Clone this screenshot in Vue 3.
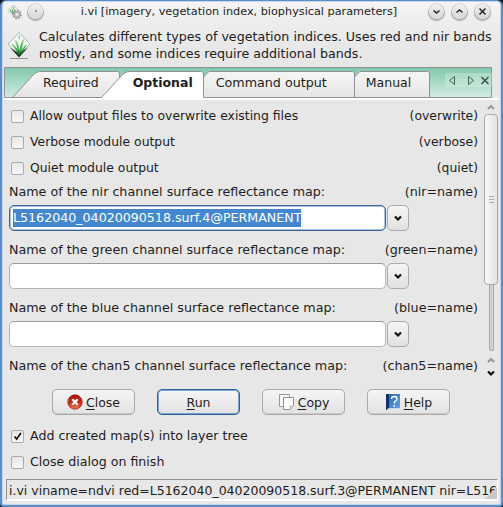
<script setup>
const flags = [
  { label: 'Allow output files to overwrite existing files', key: '(overwrite)' },
  { label: 'Verbose module output', key: '(verbose)' },
  { label: 'Quiet module output', key: '(quiet)' },
]
const fields = [
  { name: 'nir', value: 'L5162040_04020090518.surf.4@PERMANENT' },
  { name: 'green', value: '' },
  { name: 'blue', value: '' },
]
</script>

<template>
  <div class="desktop">
    <div class="window">
      <header class="titlebar">
        <svg class="app-icon" width="16" height="16" viewBox="0 0 16 16">
          <path d="M6.500 1L12 6.500L6.500 12L1 6.500Z" fill="#f4f6f4" stroke="#bcc4bc" />
          <path d="M6.500 3V5M3 6L6 10L8 5M6 10L5 5" stroke="#4aaa58" fill="none" />
          <circle cx="10" cy="10.500" r="3.700" fill="#ddd" stroke="#999" stroke-width="2" stroke-dasharray="1.800 1" />
          <circle cx="10" cy="10.500" r="2.800" fill="#ccc" stroke="#a5a5a5" />
          <circle cx="10" cy="10.500" r="1" fill="#fff" />
        </svg>
        <span class="round pin"><i></i></span>
        <h1>i.vi [imagery, vegetation index, biophysical parameters]</h1>
        <span class="round"><svg width="15" height="15" viewBox="0 0 15 15"><path d="M4.500 6.500L7.500 9L10.500 6.500" /></svg></span>
        <span class="round"><svg width="15" height="15" viewBox="0 0 15 15"><path d="M4.500 8.500L7.500 6L10.500 8.500" /></svg></span>
        <span class="round"><svg width="15" height="15" viewBox="0 0 15 15"><path d="M4.500 4.500L10.500 10.500M10.500 4.500L4.500 10.500" /></svg></span>
      </header>

      <section class="intro">
        <svg width="24" height="30" viewBox="0 0 24 30">
          <defs>
            <linearGradient id="leaf" gradientUnits="userSpaceOnUse" x1="0" y1="8" x2="0" y2="26">
              <stop offset="0" stop-color="#86d98a" /><stop offset=".6" stop-color="#35a546" /><stop offset="1" stop-color="#0a2a0e" />
            </linearGradient>
          </defs>
          <path d="M12 1.500L23 13L12 24.500L1 13Z" fill="#f5f7f5" stroke="#b2b8b2" />
          <path d="M12 26.500L3 16.500L12 22.500L21 16.500Z" fill="#243c27" />
          <path d="M11.700 25C9.500 19 7.500 16 5 13.500C8.500 15.500 10.500 18 11.800 23Z M11.700 23C10.500 17 10 13 8.500 9.500C11 12.500 12 16 12.200 21Z M12.200 24C13 17 14 12 16.500 8.500C15.500 13 14.800 18 12.600 24Z M12.400 25C14 20 16 16.500 19.500 14C17 17.500 15.500 21 12.600 25Z" fill="url(#leaf)" stroke="url(#leaf)" stroke-width=".8" />
          <path d="M12.300 4.500V8.500" stroke="#70cc78" stroke-width="1.200" />
          <path d="M3 27.500H21" stroke="#909590" />
        </svg>
        <p>Calculates different types of vegetation indices. Uses red and nir bands<br />mostly, and some indices require additional bands.</p>
      </section>

      <nav class="tabs">
        <svg class="tab-shapes" width="488" height="31" viewBox="0 0 488 31">
          <defs>
            <linearGradient id="strip" x1="0" y1="0" x2="0" y2="1">
              <stop offset="0" stop-color="#80c8ab" /><stop offset="1" stop-color="#d2ebe1" />
            </linearGradient>
            <linearGradient id="tab" x1="0" y1="0" x2="0" y2="1">
              <stop offset="0" stop-color="#f6f6f6" /><stop offset="1" stop-color="#e4e5e4" />
            </linearGradient>
          </defs>
          <rect x=".5" y=".5" width="487" height="30" fill="url(#strip)" />
          <path d="M8.500 30.500L30 7Q33 4.500 36 4.500H113.500Q115.500 4.500 115.500 7V30.500Z" fill="url(#tab)" stroke="#929292" />
          <path d="M199.500 30.500V10L205 4.500H348.500Q350.500 4.500 350.500 7V30.500Z" fill="url(#tab)" stroke="#929292" />
          <path d="M350.500 30.500V10L356 4.500H423.500Q425.500 4.500 425.500 7V30.500Z" fill="url(#tab)" stroke="#929292" />
          <path d="M97.500 30.500L119 7Q122 4.500 125 4.500H197.500Q199.500 4.500 199.500 7V30.500Z" fill="#fff" stroke="#929292" />
          <path d="M98 30.500H.5V.5H487.500V30.500H199.500" fill="none" stroke="#929292" />
          <path d="M98 30.500H199" stroke="#fff" />
          <rect x="441" y="6" width="47" height="14" fill="#fff" opacity=".24" />
          <path d="M450.500 9.500V17.500L445.500 13.500ZM464.500 9.500V17.500L469.500 13.500Z" fill="none" stroke="#3c6654" />
          <path d="M477.500 10L484.500 17M484.500 10L477.500 17" fill="none" stroke="#3c5148" stroke-width="1.500" />
        </svg>
        <div class="tab-labels">
          <span>Required</span><b>Optional</b><span>Command output</span><span>Manual</span>
        </div>
      </nav>

      <main>
        <div class="form">
          <label v-for="f in flags" :key="f.key" class="flag">
            <i class="check"></i><span>{{ f.label }}</span><em>{{ f.key }}</em>
          </label>
          <div v-for="f in fields" :key="f.name" class="field">
            <div class="caption"><span>Name of the {{ f.name }} channel surface reflectance map:</span><em>({{ f.name }}=name)</em></div>
            <div class="combo">
              <div class="entry" :class="{ focused: f.value }"><mark v-if="f.value">{{ f.value }}</mark></div>
              <div class="drop"><svg width="8" height="7" viewBox="0 0 8 7"><path d="M1 1.500L4 4.500L7 1.500" /></svg></div>
            </div>
          </div>
          <div class="field">
            <div class="caption"><span>Name of the chan5 channel surface reflectance map:</span><em>(chan5=name)</em></div>
          </div>
        </div>
        <div class="scroll">
          <svg class="dim" width="8" height="7" viewBox="0 0 8 7"><path d="M1 5L4 2L7 5" /></svg>
          <div class="track"><div class="thumb"><i></i><i></i><i></i></div><div class="groove"></div></div>
          <svg class="dim" width="8" height="7" viewBox="0 0 8 7"><path d="M1 5L4 2L7 5" /></svg>
          <svg class="dark" width="8" height="7" viewBox="0 0 8 7"><path d="M1 1.500L4 4.500L7 1.500" /></svg>
        </div>
      </main>

      <div class="buttons">
        <button>
          <svg width="16" height="16" viewBox="0 0 16 16">
            <defs><linearGradient id="red" x1="0" y1="0" x2="0" y2="1"><stop offset="0" stop-color="#a91311" /><stop offset=".5" stop-color="#c42813" /><stop offset="1" stop-color="#ef7955" /></linearGradient></defs>
            <circle cx="8" cy="8" r="7.200" fill="url(#red)" stroke="#a51b14" stroke-width=".8" />
            <path d="M5.300 5.300L10.700 10.700M10.700 5.300L5.300 10.700" stroke="#fff" stroke-width="2.300" />
          </svg>
          <span><u>C</u>lose</span>
        </button>
        <button class="primary"><span><u>R</u>un</span></button>
        <button>
          <svg width="17" height="16" viewBox="0 0 17 16">
            <path d="M1.500 .5H11.500V9L8 12.500H1.500Z" fill="#fafafa" stroke="#999" />
            <path d="M5.500 3.500H15.500V11.500L12 15.500H5.500Z" fill="#fff" stroke="#8e8e8e" />
            <path d="M12 15.500V12H15.500Z" fill="#ddd" stroke="#aaa" stroke-width=".7" />
          </svg>
          <span><u>C</u>opy</span>
        </button>
        <button>
          <svg width="16" height="16" viewBox="0 0 16 16">
            <defs><linearGradient id="blue" x1="0" y1="0" x2="1" y2="1"><stop offset="0" stop-color="#245eab" /><stop offset="1" stop-color="#63a4ec" /></linearGradient></defs>
            <path d="M1 0H15V14L14 15H3L1 16Z" fill="url(#blue)" /><path d="M1 0H4V15L1 16Z" fill="#142f61" />
            <path d="M2 15.500L4 14.500H15" stroke="#c9d8ea" fill="none" />
            <path d="M6.500 5Q6.500 2.500 9.500 2.500Q12 2.500 12 4.700Q12 6 10.500 7Q9.200 8 9.200 9.500M9.200 11V12.800" stroke="#fff" stroke-width="1.400" fill="none" />
          </svg>
          <span><u>H</u>elp</span>
        </button>
      </div>

      <div class="options">
        <label class="flag"><i class="check"><svg width="13" height="13" viewBox="0 0 13 13"><path d="M3 6.500L5.500 9.500L10.500 2.500" /></svg></i><span>Add created map(s) into layer tree</span></label>
        <label class="flag"><i class="check"></i><span>Close dialog on finish</span></label>
      </div>

      <footer><span>i.vi viname=ndvi red=L5162040_04020090518.surf.3@PERMANENT nir=L5162040_04020090518</span>
        <svg class="grip" width="12" height="12" viewBox="0 0 12 12"><path d="M12 0V12H0Z" fill="#c8c8c8" /></svg>
      </footer>
    </div>
  </div>
</template>

<style>
body { background: #05080f; overflow: hidden; }
</style>

<style scoped>
* { box-sizing: border-box; }
.desktop { width: 503px; height: 507px; background: #101722; font: 12.5px/17px "DejaVu Sans", sans-serif; color: #1d1d1d; }
.window { width: 503px; height: 507px; display: flex; flex-direction: column; border: 2px solid #5b8dc8; border-top-width: 1px; border-radius: 6px 6px 4px 4px; background: linear-gradient(#f5f5f5, #ededed 22px, #e7e7e7 50px); padding: 0 2px; overflow: hidden; box-shadow: inset 0 0 0 1px #c5d6e9; }
i, em { font-style: normal; }
h1, p { margin: 0; font-weight: normal; }
span, b, p, h1, em { white-space: nowrap; }
.titlebar { height: 22px; flex: none; display: flex; align-items: center; padding: 0 9px 2px 3px; }
.app-icon { margin-right: 5px; margin-top: 2px; }
.titlebar h1 { flex: 1; font-size: 11.250px; line-height: 20px; text-align: center; padding: 1px 0 0 6px; }
.round { width: 15px; height: 15px; flex: none; border-radius: 50%; background: linear-gradient(#f0f0f0, #d8d8d8); box-shadow: 0 0 0 .5px #bbb, 0 1px 1px 1px #aaa; display: flex; align-items: center; justify-content: center; }
.round + .round { margin-left: 8px; }
.round path { fill: none; stroke: #252525; stroke-width: 1.500; }
.pin i { width: 2px; height: 2px; background: #999; }
.intro { height: 44px; flex: none; display: flex; padding: 5px 0 0 3px; gap: 8px; font-size: 12.650px; }
.intro svg { margin-top: 3px; flex: none; }
.tabs { height: 31px; width: 488px; flex: none; display: grid; }
.tab-shapes, .tab-labels { grid-area: 1 / 1; }
.tab-labels { display: flex; align-items: center; padding-left: 39px; }
.tab-labels b { margin-left: 34px; }
.tab-labels span:nth-child(3) { margin-left: 23px; font-size: 12.700px; }
.tab-labels span:nth-child(4) { margin-left: 39px; }
main { height: 282px; flex: none; display: flex; border-top: 2px solid #fff; }
.form { width: 474px; padding: 3px 0 0 5px; overflow: hidden; }
.flag { display: flex; align-items: center; height: 26px; padding-left: 2px; font-size: 12.400px; }
.flag span, .flag em { padding-bottom: 2px; }
.check { width: 13px; height: 13px; flex: none; margin-right: 6px; border: 1px solid #aaa; border-radius: 2px; background: linear-gradient(#e8e8e8, #f7f7f7); display: flex; align-items: center; justify-content: center; }
.check path { fill: none; stroke: #111; stroke-width: 2; }
.flag em, .caption em { margin-left: auto; }
.field { padding-top: 9px; }
.flag + .field { padding-top: 1px; }
.caption { height: 23px; padding-bottom: 4px; display: flex; align-items: center; font-size: 12.700px; }
.combo { display: flex; gap: 1px; height: 26px; }
.entry { width: 377px; border: 1px solid #b6b6b6; border-top-color: #999; border-radius: 5px; background: #fff; padding: 3px; }
.focused { border: 1px solid #3c6391; box-shadow: inset 0 0 0 1px #a9c3e2; }
.entry mark { display: inline-block; height: 18px; line-height: 17px; background: #4388ce; color: #fff; font-size: 12.630px; }
.drop { width: 22px; border: 1px solid #aaa; border-radius: 5px; background: linear-gradient(#f5f5f5, #e1e1e1); display: flex; align-items: center; justify-content: center; }
.drop path, .scroll path { fill: none; stroke: #111; stroke-width: 2.200; }
.scroll { width: 14px; margin-left: 6px; display: flex; flex-direction: column; align-items: center; padding-top: 4px; }
.scroll svg { flex: none; }
.scroll .dim path { stroke: #999; }
.track { width: 14px; height: 237px; margin: 3px 0 6px; display: flex; flex-direction: column; align-items: center; flex: none; }
.thumb { width: 14px; height: 171px; border: 1px solid #aaa; border-radius: 4px; background: linear-gradient(90deg, #f8f8f8, #e3e3e3); display: flex; flex-direction: column; gap: 2px; align-items: center; justify-content: center; }
.thumb i { width: 5px; height: 1px; background: #aaa; }
.groove { flex: 1; width: 5px; border: 1px solid #aaa; border-top: 0; border-radius: 0 0 3px 3px; background: #d1d1d1; }
.dark { margin-top: 6px; }
.buttons { flex: none; display: flex; gap: 22px; padding: 9px 0 0 48px; }
button { width: 83px; height: 26px; padding: 0; border: 1px solid #aaa; border-radius: 5px; background: linear-gradient(#f5f5f5, #e2e2e2); font: inherit; color: inherit; display: flex; align-items: center; justify-content: center; gap: 3px; box-shadow: inset 0 -1px 0 #cacaca; }
.primary { border: 1px solid #355f96; box-shadow: inset 0 0 0 1px #7ba1d0; }
u { text-underline-offset: 2px; text-decoration-thickness: 1px; text-decoration-skip-ink: none; }
.options { flex: none; padding: 8px 0 4px 5px; }
.options .flag { font-size: 12.600px; }
.options .flag span { padding-bottom: 1px; }
footer { flex: none; display: flex; width: 492px; height: 22px; margin-left: 2px; border: 1px solid #949494; border-right-color: #fff; border-bottom: 2px solid #fff; padding-left: 2px; overflow: hidden; line-height: 21px; position: relative; }
.grip { position: absolute; right: 0; bottom: 0; }
</style>
